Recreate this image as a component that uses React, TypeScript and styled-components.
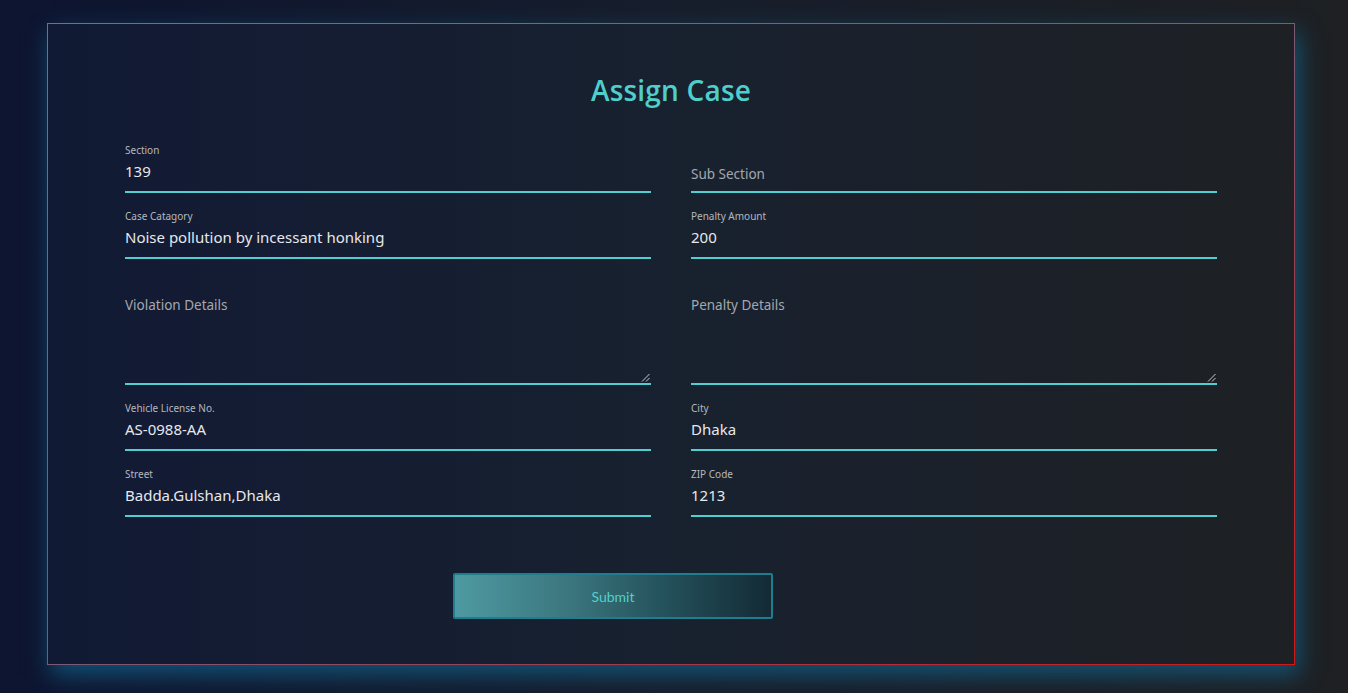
import React from "react";
import styled, { createGlobalStyle } from "styled-components";

const Global = createGlobalStyle`
  html, body { margin: 0; padding: 0; }
  body {
    background: linear-gradient(to right, #0d1531 0%, #171e2c 50%, #1e2023 100%);
    min-height: 693px;
    font-family: "Noto Sans", "Open Sans", sans-serif;
    overflow: hidden;
  }
`;

const Page = styled.div`
  padding: 23px 53px 28px 47px;
  box-sizing: border-box;
  height: 693px;
`;

const Card = styled.div`
  box-sizing: border-box;
  width: 1248px;
  height: 642px;
  border: 1px solid transparent;
  border-image: linear-gradient(to bottom right, #2a8ea8 0%, #7a5a78 50%, #d01818 100%) 1;
  background: linear-gradient(to right, #111a34 0%, #18212f 50%, #1e2024 100%);
  box-shadow: 4px 10px 22px rgba(18, 100, 140, 0.75);
  padding: 50px 77px 0 77px;
  display: flex;
  flex-direction: column;
`;

const Title = styled.h1`
  margin: 0 0 29px 0;
  text-align: center;
  font-family: "Open Sans", "Noto Sans", sans-serif;
  font-size: 28px;
  font-weight: 600;
  color: #4fcfcb;
  line-height: 32px;
  letter-spacing: 0.2px;
`;

const Grid = styled.div`
  display: grid;
  grid-template-columns: 526px 526px;
  column-gap: 40px;
  row-gap: 0;
`;

const Field = styled.div<{ $tall?: boolean }>`
  height: ${(p) => (p.$tall ? "126px" : "66px")};
  display: flex;
  flex-direction: column;
  justify-content: flex-end;
  padding-bottom: 8px;
  box-sizing: border-box;
  position: relative;
`;

const Label = styled.div`
  font-size: 10px;
  color: #b4b8bf;
  line-height: 12px;
  margin-bottom: 5px;
`;

const Value = styled.div`
  font-size: 15px;
  color: #e6e8ec;
  line-height: 20px;
  padding-bottom: 10px;
  border-bottom: 2px solid #4fcfd2;
`;

const Placeholder = styled(Value)`
  font-size: 13.5px;
  color: #a4a8ae;
  padding-bottom: 7px;
`;

const Area = styled.div`
  height: 97px;
  border-bottom: 2px solid #4fcfd2;
  position: relative;
  font-size: 13.5px;
  color: #a4a8ae;
  line-height: 20px;
  padding-top: 7px;
  box-sizing: border-box;
`;

const Grip = styled.svg`
  position: absolute;
  right: 1px;
  bottom: 1px;
  width: 9px;
  height: 9px;
`;

const ButtonRow = styled.div`
  display: flex;
  padding-left: 328px;
  margin-top: 48px;
`;

const Button = styled.button`
  width: 320px;
  height: 46px;
  border: 2px solid #1f7d90;
  border-radius: 2px;
  background: linear-gradient(to right, #4e9aa2 0%, #3c777f 35%, #25535d 65%, #132a35 100%);
  color: #52d0cb;
  font-family: "Lato", "Open Sans", sans-serif;
  font-size: 14px;
  cursor: pointer;
`;

const fields: Array<{ label: string; value?: string; placeholder?: string; tall?: boolean }> = [
  { label: "Section", value: "139" },
  { label: "Sub Section", placeholder: "Sub Section" },
  { label: "Case Catagory", value: "Noise pollution by incessant honking" },
  { label: "Penalty Amount", value: "200" },
  { label: "Violation Details", tall: true },
  { label: "Penalty Details", tall: true },
  { label: "Vehicle License No.", value: "AS-0988-AA" },
  { label: "City", value: "Dhaka" },
  { label: "Street", value: "Badda.Gulshan,Dhaka" },
  { label: "ZIP Code", value: "1213" },
];

export default function App() {
  return (
    <>
      <Global />
      <Page>
        <Card>
          <Title>Assign Case</Title>
          <Grid>
            {fields.map((f) => (
              <Field key={f.label} $tall={f.tall}>
                {f.tall ? (
                  <Area>
                    {f.label}
                    <Grip viewBox="0 0 9 9">
                      <line x1="8.5" y1="1" x2="1" y2="8.5" stroke="#c8ccd0" strokeWidth="1" />
                      <line x1="8.5" y1="5" x2="5" y2="8.5" stroke="#c8ccd0" strokeWidth="1" />
                    </Grip>
                  </Area>
                ) : f.placeholder ? (
                  <Placeholder>{f.placeholder}</Placeholder>
                ) : (
                  <>
                    <Label>{f.label}</Label>
                    <Value>{f.value}</Value>
                  </>
                )}
              </Field>
            ))}
          </Grid>
          <ButtonRow>
            <Button>Submit</Button>
          </ButtonRow>
        </Card>
      </Page>
    </>
  );
}
